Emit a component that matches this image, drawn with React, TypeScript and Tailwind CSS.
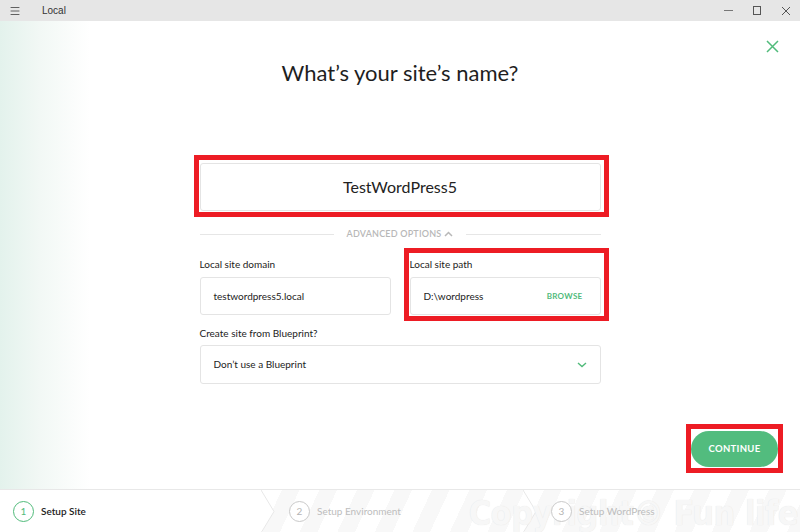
import { Menu } from "lucide-react";

const font = { fontFamily: "Lato, 'Noto Sans', sans-serif" };

function RedMark({ className }: { className: string }) {
  return (
    <div
      className={`pointer-events-none absolute border-[5px] border-[#ed1c24] ${className}`}
    />
  );
}

type Step = { num: number; label: string; active: boolean };

const steps: Step[] = [
  { num: 1, label: "Setup Site", active: true },
  { num: 2, label: "Setup Environment", active: false },
  { num: 3, label: "Setup WordPress", active: false },
];

export default function App() {
  return (
    <div
      className="flex h-[532px] w-[800px] flex-col overflow-hidden bg-white"
      style={font}
    >
      {/* window title bar */}
      <div className="flex h-[21px] items-center bg-[#e6e6e6] text-[#333]">
        <Menu size={12} strokeWidth={1.5} className="ml-[9px]" />
        <span
          className="ml-[21px] text-[10px]"
          style={{ fontFamily: "'Liberation Sans', sans-serif" }}
        >
          Local
        </span>
        <div className="ml-auto flex items-center gap-[20px] pr-[9px] text-[#555]">
          <div className="h-px w-[9px] bg-[#777]" />
          <div className="h-[9px] w-[8px] border border-[#555]" />
          <svg width="10" height="10" viewBox="0 0 10 10">
            <path d="M1 1L9 9M9 1L1 9" stroke="#555" strokeWidth="1" />
          </svg>
        </div>
      </div>

      {/* main area */}
      <div className="relative flex flex-1 flex-col items-center bg-[linear-gradient(90deg,#e3f2ec_0px,#f2f8f5_40px,#ffffff_90px)]">
        <button className="absolute right-[21px] top-[19px]">
          <svg width="13" height="13" viewBox="0 0 13 13">
            <path
              d="M1 1L12 12M12 1L1 12"
              stroke="#51bb7b"
              strokeWidth="1.5"
            />
          </svg>
        </button>

        <h1 className="mt-[37px] text-[22px] leading-[30px] text-[#1e1e1e]">
          What’s your site’s name?
        </h1>

        <div className="relative mt-[75px] w-[401px]">
          <div className="flex h-[48px] items-center justify-center rounded-[3px] border border-[#e4e4e4] text-[16px] text-[#222]">
            TestWordPress5
          </div>
          <RedMark className="-left-[6px] -top-[8px] -right-[8px] -bottom-[6px]" />
        </div>

        <div className="mt-[16px] flex h-[14px] w-[401px] items-center">
          <div className="h-px flex-1 bg-[#e6e6e6]" />
          <div className="mx-[13px] flex items-center gap-[3px] text-[9px] font-semibold tracking-[0.2px] text-[#b8b8b8]">
            ADVANCED OPTIONS
            <svg width="9" height="6" viewBox="0 0 9 6">
              <polyline
                points="1,5 4.5,1.5 8,5"
                fill="none"
                stroke="#b8b8b8"
                strokeWidth="1.5"
              />
            </svg>
          </div>
          <div className="h-px flex-1 bg-[#e6e6e6]" />
        </div>

        <div className="mt-[16px] grid w-[401px] grid-cols-2 gap-x-[19px]">
          <div className="flex flex-col">
            <label className="text-[10px] leading-[14px] text-[#222]">
              Local site domain
            </label>
            <div className="mt-[6px] flex h-[38px] items-center rounded-[3px] border border-[#e4e4e4] pl-[13px] text-[10px] text-[#222]">
              testwordpress5.local
            </div>
          </div>
          <div className="relative flex flex-col">
            <label className="text-[10px] leading-[14px] text-[#222]">
              Local site path
            </label>
            <div className="mt-[6px] flex h-[38px] items-center justify-between rounded-[3px] border border-[#e4e4e4] pl-[13px] pr-[17px] text-[10px] text-[#222]">
              <span>D:\wordpress</span>
              <span className="text-[8px] font-bold tracking-[0.3px] text-[#51bb7b]">
                BROWSE
              </span>
            </div>
            <RedMark className="-left-[6px] -top-[9px] -right-[8px] -bottom-[6px]" />
          </div>
        </div>

        <div className="mt-[11px] flex w-[401px] flex-col">
          <label className="text-[10px] leading-[14px] text-[#222]">
            Create site from Blueprint?
          </label>
          <div className="mt-[5px] flex h-[39px] items-center justify-between rounded-[3px] border border-[#e4e4e4] pl-[13px] pr-[13px] text-[10px] text-[#222]">
            <span>Don’t use a Blueprint</span>
            <svg width="10" height="6" viewBox="0 0 10 6">
              <polyline
                points="1,1 5,4.5 9,1"
                fill="none"
                stroke="#51bb7b"
                strokeWidth="1.4"
              />
            </svg>
          </div>
        </div>

        <div className="mt-[47px] flex w-full justify-end pr-[22px]">
          <div className="relative">
            <button className="flex h-[36px] w-[87px] items-center justify-center rounded-full bg-[#52bc7e] text-[9.5px] font-bold tracking-[0.3px] text-white">
              CONTINUE
            </button>
            <RedMark className="-left-[5px] -top-[7px] -right-[5px] -bottom-[6px]" />
          </div>
        </div>
      </div>

      {/* steps bar */}
      <div className="relative flex h-[43px] shrink-0 border-t border-[#e8e8e8]">
        {steps.map((step) => (
          <div
            key={step.num}
            className={`relative flex w-[262px] items-center pl-[13px] ${
              step.num === 1
                ? "bg-white"
                : "bg-[repeating-linear-gradient(115deg,#ffffff_0px,#ffffff_18px,#f8f8f8_18px,#f8f8f8_34px)]"
            } ${step.num === 3 ? "flex-1" : ""}`}
          >
            {step.num !== 1 && (
              <svg
                width="14"
                height="43"
                viewBox="0 0 14 43"
                className="absolute -left-px top-0"
              >
                <polygon points="0,0 13,21.5 0,43" fill="#ffffff" />
                <polyline
                  points="0,0 13,21.5 0,43"
                  fill="none"
                  stroke="#e8e8e8"
                  strokeWidth="1"
                />
              </svg>
            )}
            {step.num === 3 && (
              <div
                className="pointer-events-none absolute bottom-[-7px] right-[2px] whitespace-nowrap text-[34px] font-bold tracking-[-0.5px] text-[#f7f7f7]"
                style={{
                  fontFamily:
                    "'DejaVu Sans Condensed', 'Liberation Sans Narrow', sans-serif",
                  textShadow: "0 0 1px #e2e2e2",
                }}
              >
                Copyright© Fun life
              </div>
            )}
            <div
              className={`relative flex h-[21px] w-[21px] items-center justify-center rounded-full border-[1.5px] bg-white text-[10px] ${
                step.num === 1
                  ? "border-[#51bb7b] text-[#51bb7b]"
                  : "ml-[14px] border-[#c9c9c9] text-[#b5b5b5]"
              }`}
            >
              {step.num}
            </div>
            <span
              className={`relative ml-[7px] text-[10px] ${
                step.active ? "font-semibold text-[#222]" : "text-[#bdbdbd]"
              }`}
            >
              {step.label}
            </span>
          </div>
        ))}
      </div>
    </div>
  );
}
